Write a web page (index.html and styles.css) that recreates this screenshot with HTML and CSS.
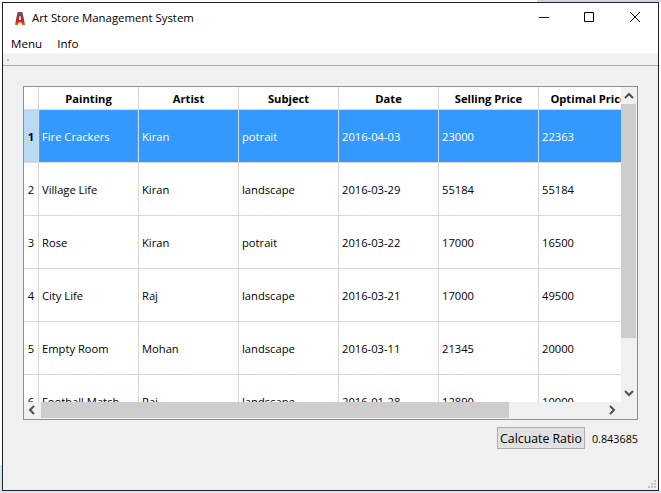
FILE: index.html
```html
<!DOCTYPE html>
<html lang="en">
<head>
    <meta charset="UTF-8">
    <title>Art Store Management System</title>
    <link rel="stylesheet" href="styles.css">
</head>
<body>
    <div class="window">
        <div class="titlebar">
            <svg class="app-icon" width="10" height="13" viewBox="0 0 10 13">
                <defs>
                    <linearGradient id="iconFill" x1="0" y1="0" x2="0" y2="1">
                        <stop offset="0" stop-color="#6a5a58"/>
                        <stop offset="0.45" stop-color="#8a3a36"/>
                        <stop offset="0.75" stop-color="#e8200f"/>
                        <stop offset="1" stop-color="#f0641a"/>
                    </linearGradient>
                </defs>
                <path d="M2.500 0h5L10 13H7L6.500 10.500h-3L3 13H0zM4.500 4L4 8h2L5.500 4z" fill="url(#iconFill)"/>
            </svg>
            <span class="title">Art Store Management System</span>
            <div class="controls">
                <svg class="ctl" width="46" height="30" viewBox="0 0 46 30"><path d="M19 14.500h10" stroke="#000" fill="none"/></svg>
                <svg class="ctl" width="46" height="30" viewBox="0 0 46 30"><path d="M18.500 9.500h9v9h-9z" stroke="#000" fill="none"/></svg>
                <svg class="ctl" width="46" height="30" viewBox="0 0 46 30"><path d="M18 9l10 10M28 9L18 19" stroke="#000" fill="none"/></svg>
            </div>
        </div>
        <div class="menubar">
            <span class="menu-item">Menu</span>
            <span class="menu-item">Info</span>
        </div>
        <div class="toolbar"><span class="grip"></span></div>
        <div class="content">
            <div class="table-frame">
                <div class="table-view">
                    <div class="table-clip">
                        <table class="grid">
                            <thead>
                                <tr>
                                    <th class="corner"></th>
                                    <th>Painting</th><th>Artist</th><th>Subject</th><th>Date</th><th>Selling Price</th><th>Optimal Price</th>
                                </tr>
                            </thead>
                            <tbody>
                                <tr class="selected">
                                    <th class="rowhead">1</th>
                                    <td class="current">Fire Crackers</td><td>Kiran</td><td>potrait</td><td>2016-04-03</td><td>23000</td><td>22363</td>
                                </tr>
                                <tr>
                                    <th class="rowhead">2</th>
                                    <td>Village Life</td><td>Kiran</td><td>landscape</td><td>2016-03-29</td><td>55184</td><td>55184</td>
                                </tr>
                                <tr>
                                    <th class="rowhead">3</th>
                                    <td>Rose</td><td>Kiran</td><td>potrait</td><td>2016-03-22</td><td>17000</td><td>16500</td>
                                </tr>
                                <tr>
                                    <th class="rowhead">4</th>
                                    <td>City Life</td><td>Raj</td><td>landscape</td><td>2016-03-21</td><td>17000</td><td>49500</td>
                                </tr>
                                <tr>
                                    <th class="rowhead">5</th>
                                    <td>Empty Room</td><td>Mohan</td><td>landscape</td><td>2016-03-11</td><td>21345</td><td>20000</td>
                                </tr>
                                <tr>
                                    <th class="rowhead">6</th>
                                    <td>Football Match</td><td>Raj</td><td>landscape</td><td>2016-01-28</td><td>12890</td><td>10000</td>
                                </tr>
                            </tbody>
                        </table>
                    </div>
                    <div class="vscroll">
                        <svg class="arrow" width="16" height="17" viewBox="0 0 16 17"><path d="M4 11l4-4 4 4" stroke="#505050" stroke-width="2" fill="none"/></svg>
                        <div class="vtrack"><div class="vthumb"></div></div>
                        <svg class="arrow" width="16" height="17" viewBox="0 0 16 17"><path d="M4 6l4 4 4-4" stroke="#505050" stroke-width="2" fill="none"/></svg>
                    </div>
                </div>
                <div class="hscroll">
                    <svg class="arrow" width="17" height="17" viewBox="0 0 17 17"><path d="M10 4L6 8l4 4" stroke="#505050" stroke-width="2" fill="none"/></svg>
                    <div class="htrack"><div class="hthumb"></div></div>
                    <svg class="arrow" width="17" height="17" viewBox="0 0 17 17"><path d="M7 4l4 4-4 4" stroke="#505050" stroke-width="2" fill="none"/></svg>
                    <span class="scroll-corner"></span>
                </div>
            </div>
            <div class="actions">
                <button class="calc" type="button">Calcuate Ratio</button>
                <span class="ratio">0.843685</span>
            </div>
        </div>
        <svg class="size-grip" width="10" height="10" viewBox="0 0 10 10">
            <path d="M7 1h2v2H7zM4 4h2v2H4zM7 4h2v2H7zM1 7h2v2H1zM4 7h2v2H4zM7 7h2v2H7z" fill="#c4c4c4"/>
        </svg>
    </div>
</body>
</html>
```

FILE: styles.css
```css
html, body {
    margin: 0;
    padding: 0;
}
/* the desktop showing round the window: white, with a bit of blue along the edges */
body {
    width: 661px;
    height: 493px;
    overflow: hidden;
    background:
        linear-gradient(#c9d5e5, #c9d5e5) 537px 0 / 124px 2px no-repeat,
        linear-gradient(#d6e3f1, #d6e3f1) 0 491px / 661px 2px no-repeat,
        linear-gradient(#d6e3f1, #d6e3f1) 0 465px / 2px 28px no-repeat,
        #fff;
    font-family: "Open Sans", "Liberation Sans", sans-serif;
    font-size: 11.2px;
    color: #000;
}
.window {
    position: relative;
    box-sizing: border-box;
    width: 657px;
    height: 489px;
    margin: 2px 0 0 2px;
    border: 1px solid #222;
    background-color: #f0f0f0;
    display: flex;
    flex-direction: column;
}
.titlebar {
    height: 30px;
    background-color: #fff;
    display: flex;
    align-items: center;
    padding-left: 12px;
}
.app-icon {
    flex: none;
}
.title {
    margin-left: 7px;
    padding-bottom: 2px;
    font-size: 11.4px;
}
.controls {
    margin-left: auto;
    display: flex;
}
.ctl {
    display: block;
}
.menubar {
    height: 20px;
    background-color: #fff;
    display: flex;
    align-items: center;
    padding-left: 8px;
    gap: 15px;
    font-size: 11.6px;
    border-bottom: 1px solid #f8f8f8;
}
.toolbar {
    box-sizing: border-box;
    height: 12px;
    border-bottom: 1px solid #a9a9a9;
    background-color: #f0f0f0;
    display: flex;
    align-items: center;
    padding-left: 4px;
}
.grip {
    width: 2px;
    height: 2px;
    background-color: #bbb;
}
.content {
    flex: 1;
    padding: 20px 0 0 20px;
}
.table-frame {
    box-sizing: border-box;
    width: 615px;
    height: 334px;
    border: 1px solid #8f8f8f;
    display: flex;
    flex-direction: column;
}
.table-view {
    display: flex;
    flex: 1;
    min-height: 0;
}
.table-clip {
    flex: 1;
    min-width: 0;
    overflow: hidden;
    background-color: #fff;
}
.grid {
    border-collapse: separate;
    border-spacing: 0;
    table-layout: fixed;
    width: 615px;
}
.grid th, .grid td {
    box-sizing: border-box;
    padding: 0;
    overflow: hidden;
    white-space: nowrap;
    border-right: 1px solid #d8d8d8;
    border-bottom: 1px solid #d8d8d8;
}
.grid thead th {
    height: 23px;
    width: 100px;
    font-weight: 700;
    background-color: #fff;
}
.grid thead th.corner {
    width: 15px;
}
.grid td {
    height: 53px;
    padding-left: 3px;
}
.rowhead {
    font-weight: 400;
    background-color: #fff;
}
.selected td {
    background-color: #3399ff;
    color: #fff;
}
.selected .rowhead {
    background-color: #b9d9f3;
    font-weight: 700;
}
.current {
    position: relative;
}
/* focus rectangle over the current cell */
.current::after {
    content: "";
    position: absolute;
    top: 0;
    left: 0;
    right: 0;
    bottom: 0;
    border: 1px dotted #e08a3c;
}
.vscroll {
    width: 16px;
    flex: none;
    background-color: #f0f0f0;
    display: flex;
    flex-direction: column;
}
.arrow {
    display: block;
    flex: none;
}
.vtrack {
    flex: 1;
}
.vthumb {
    width: 15px;
    height: 234px;
    background-color: #cdcdcd;
}
.hscroll {
    height: 17px;
    flex: none;
    background-color: #f0f0f0;
    display: flex;
}
.htrack {
    flex: 1;
}
.hthumb {
    width: 468px;
    height: 16px;
    background-color: #cdcdcd;
}
.scroll-corner {
    width: 17px;
    flex: none;
}
.actions {
    width: 615px;
    display: flex;
    align-items: center;
    justify-content: flex-end;
    gap: 7px;
    margin-top: 7px;
}
.calc {
    box-sizing: border-box;
    width: 88px;
    height: 22px;
    padding: 0;
    background-color: #e1e1e1;
    border: 1px solid #adadad;
    font-family: inherit;
    font-size: 12.3px;
    color: #000;
}
.ratio {
    font-size: 10.8px;
}
.size-grip {
    position: absolute;
    right: 1px;
    bottom: 1px;
}
```
